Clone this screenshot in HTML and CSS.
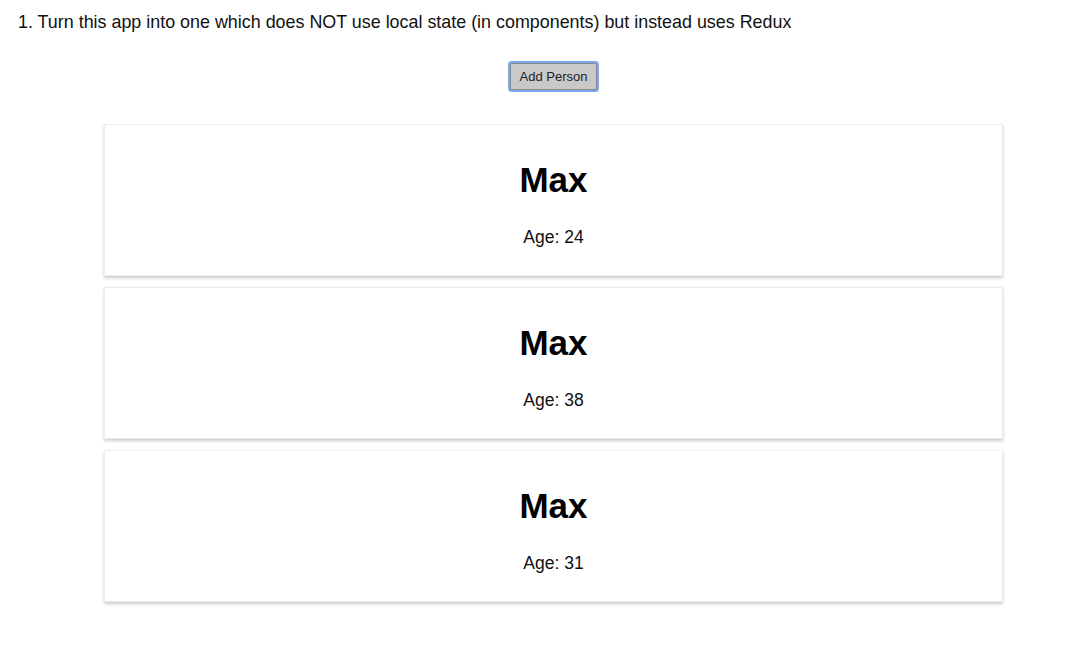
FILE: index.html
```html
<!DOCTYPE html>
<html>
<head>
<meta charset="utf-8">
<link rel="stylesheet" href="styles.css">
</head>
<body>
<p class="task">1. Turn this app into one which does NOT use local state (in components) but instead uses Redux</p>
<main class="app">
  <button class="add-btn">Add Person</button>
  <div class="person">
    <h1 class="name">Max</h1>
    <p class="age">Age: 24</p>
  </div>
  <div class="person">
    <h1 class="name">Max</h1>
    <p class="age">Age: 38</p>
  </div>
  <div class="person">
    <h1 class="name">Max</h1>
    <p class="age">Age: 31</p>
  </div>
</main>
</body>
</html>
```
FILE: styles.css
```css
html, body {
  margin: 0;
  padding: 0;
  background: #fff;
}
body {
  font-family: "Liberation Sans", Arial, sans-serif;
  color: #111;
}
.task {
  margin: 0;
  padding: 12px 0 0 18px;
  font-size: 17.9px;
  line-height: 20px;
}
.app {
  margin-left: 33px;
  display: flex;
  flex-direction: column;
  align-items: center;
  padding-top: 31px;
}
.add-btn {
  font-family: "Liberation Sans", Arial, sans-serif;
  font-size: 13px;
  color: #222;
  background: #c9c9c9;
  border: 1px solid #8a8a8a;
  border-radius: 2px;
  width: 87px;
  height: 27px;
  padding: 0;
  box-shadow: 0 0 0 2px #7aa7e8;
  margin-bottom: 34px;
}
.person {
  width: 897px;
  height: 150px;
  border: 1px solid #eee;
  box-shadow: 0 2px 3px #ccc;
  margin-bottom: 11px;
  text-align: center;
  box-sizing: content-box;
}
.name {
  margin: 35px 0 0;
  font-size: 35px;
  line-height: 40px;
  font-weight: bold;
  color: #000;
}
.age {
  margin: 27px 0 0;
  font-size: 17.5px;
  line-height: 20px;
}
```
